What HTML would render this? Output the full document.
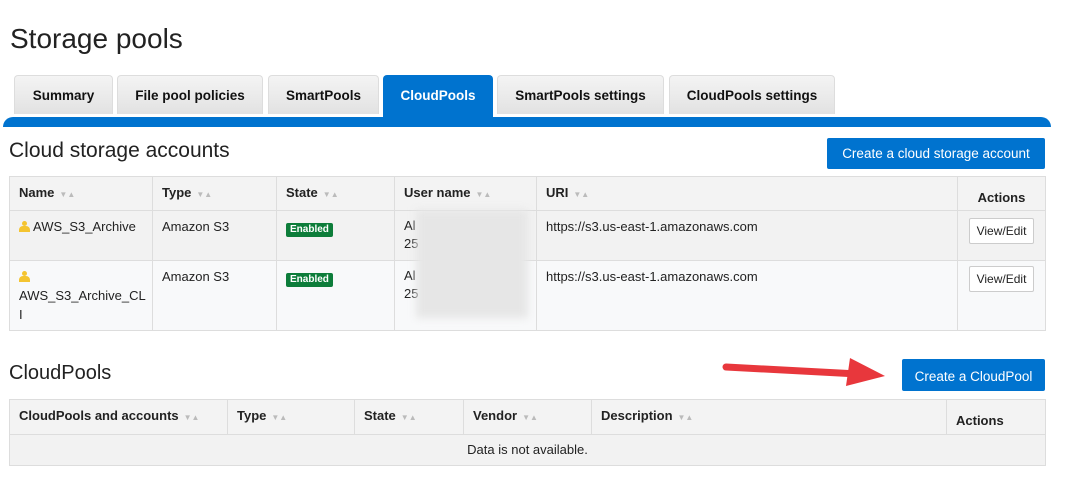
<!DOCTYPE html>
<html><head><style>
body{margin:0;width:1086px;height:503px;background:#fff;font-family:"Liberation Sans",sans-serif;color:#222;position:relative;overflow:hidden}
.a{position:absolute}
.tab{position:absolute;top:75px;height:39px;background:linear-gradient(#f4f4f4,#e2e2e2);border:1px solid #ddd;border-bottom:none;border-radius:4px 4px 0 0;box-sizing:border-box;font-weight:bold;font-size:13.5px;text-align:center;line-height:40px;color:#111}
.btn{position:absolute;background:#0073cf;color:#fff;font-size:13.5px;text-align:center;border-radius:2px}
table{position:absolute;border-collapse:collapse;font-size:13px;table-layout:fixed;line-height:16px}
td,th{border:1px solid #ddd;vertical-align:top;text-align:left;padding:0 9px;box-sizing:border-box}
th{background:#f3f3f3;font-weight:bold;font-size:13px;vertical-align:middle;padding-bottom:0}
.s{color:#bbb;font-size:8px;font-weight:normal;margin-left:5px}
.en{display:inline-block;background:#0d7d3a;color:#fff;font-size:10px;font-weight:bold;padding:1px 4px;border-radius:2px;line-height:12px}
.ve{display:inline-block;border:1px solid #ccc;border-radius:2px;background:#fff;font-size:12px;padding:4px 7px;margin-top:7px}
.u{display:inline-block;width:11px;height:11px;position:relative;vertical-align:-1px;margin-right:3px}
.u:before{content:"";position:absolute;left:3px;top:0;width:5px;height:5px;border-radius:50%;background:#f4c430}
.u:after{content:"";position:absolute;left:0;top:5px;width:11px;height:6px;border-radius:4px 4px 0 0;background:#f4c430}
</style></head><body>
<div class="a" style="left:10px;top:23px;font-size:28px;color:#222">Storage pools</div>
<div class="tab" style="left:14px;width:99px">Summary</div>
<div class="tab" style="left:117px;width:146px">File pool policies</div>
<div class="tab" style="left:268px;width:111px">SmartPools</div>
<div class="tab" style="left:383px;width:110px;height:45px;background:#0073cf;border-color:#0073cf;color:#fff">CloudPools</div>
<div class="tab" style="left:497px;width:167px">SmartPools settings</div>
<div class="tab" style="left:669px;width:166px">CloudPools settings</div>
<div class="a" style="left:3px;top:117px;width:1048px;height:10px;background:#0073cf;border-radius:10px 10px 0 0"></div>
<div class="a" style="left:9px;top:139px;font-size:21px;color:#222">Cloud storage accounts</div>
<div class="btn" style="left:827px;top:138px;width:218px;height:31px;line-height:31px">Create a cloud storage account</div>
<table style="left:9px;top:176px;width:1036px">
<colgroup><col style="width:143px"><col style="width:124px"><col style="width:118px"><col style="width:142px"><col style="width:421px"><col style="width:88px"></colgroup>
<tr style="height:34px"><th>Name<span class="s">▼▲</span></th><th>Type<span class="s">▼▲</span></th><th>State<span class="s">▼▲</span></th><th>User name<span class="s">▼▲</span></th><th>URI<span class="s">▼▲</span></th><th style="padding:8px 0 0 0;text-align:center">Actions</th></tr>
<tr style="background:#f2f2f2;height:50px"><td style="padding:8px 9px"><span class="u"></span>AWS_S3_Archive</td><td style="padding:8px 9px">Amazon S3</td><td style="padding:9px 9px"><span class="en">Enabled</span></td><td style="padding:6px 9px;line-height:18px">Al<br>25</td><td style="padding:8px 9px">https://s3.us-east-1.amazonaws.com</td><td style="text-align:center;padding:0"><span class="ve">View/Edit</span></td></tr>
<tr style="background:#f8f9fa;height:70px"><td style="padding:6px 9px;line-height:19px"><span class="u"></span><br>AWS_S3_Archive_CL<br>I</td><td style="padding:8px 9px">Amazon S3</td><td style="padding:9px 9px"><span class="en">Enabled</span></td><td style="padding:6px 9px;line-height:18px">Al<br>25</td><td style="padding:8px 9px">https://s3.us-east-1.amazonaws.com</td><td style="text-align:center;padding:0"><span class="ve" style="margin-top:5px">View/Edit</span></td></tr>
</table>
<div class="a" style="left:416px;top:210px;width:112px;height:108px;background:#e6e6e6;filter:blur(4px)"></div>
<div class="a" style="left:9px;top:362px;font-size:20px;color:#222">CloudPools</div>
<svg class="a" style="left:718px;top:352px" width="170" height="36"><path d="M8 15 L140 22" stroke="#e8373c" stroke-width="7" stroke-linecap="round"/><path d="M132 6 L167 24 L128 34 Z" fill="#e8373c"/></svg>
<div class="btn" style="left:902px;top:359px;width:143px;height:32px;line-height:36px">Create a CloudPool</div>
<table style="left:9px;top:399px;width:1036px">
<colgroup><col style="width:218px"><col style="width:127px"><col style="width:109px"><col style="width:128px"><col style="width:355px"><col style="width:99px"></colgroup>
<tr style="height:35px"><th>CloudPools and accounts<span class="s">▼▲</span></th><th>Type<span class="s">▼▲</span></th><th>State<span class="s">▼▲</span></th><th>Vendor<span class="s">▼▲</span></th><th>Description<span class="s">▼▲</span></th><th style="padding:8px 9px 0">Actions</th></tr>
<tr style="background:#f2f2f2;height:31px"><td colspan="6" style="text-align:center;vertical-align:middle">Data is not available.</td></tr>
</table>
</body></html>
